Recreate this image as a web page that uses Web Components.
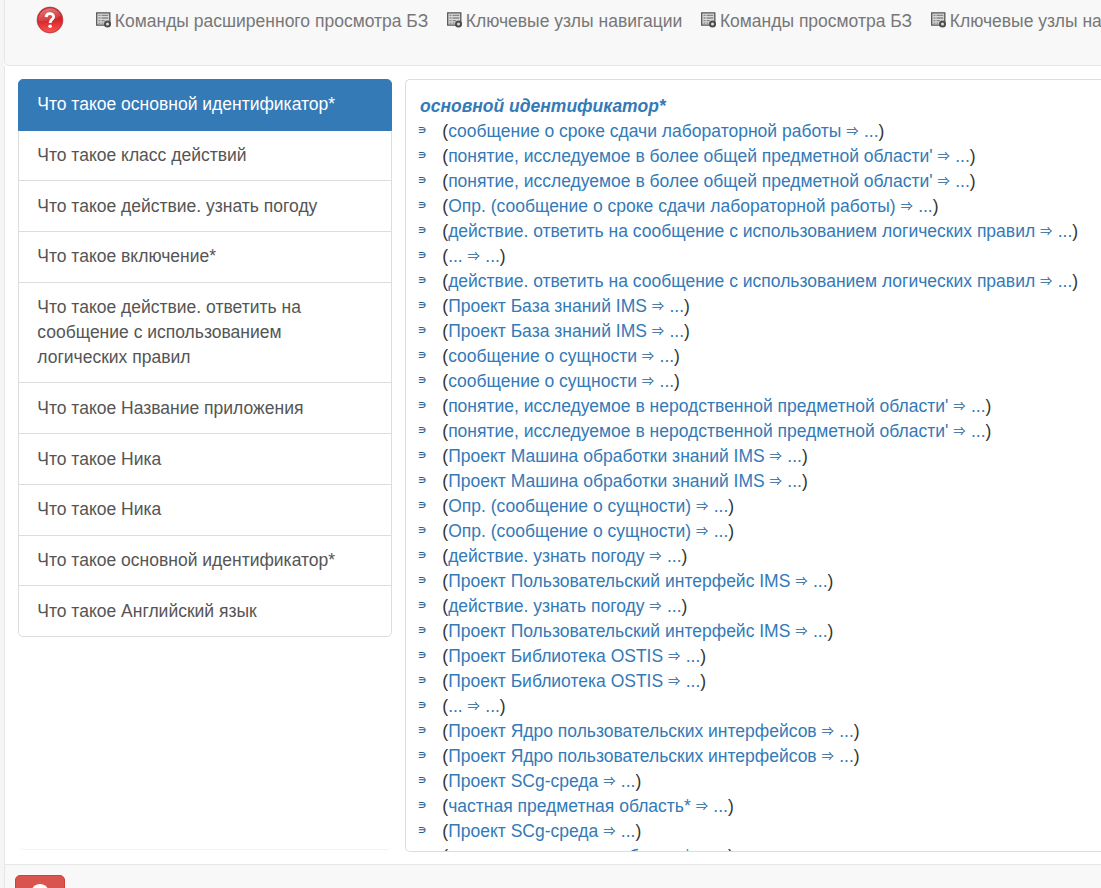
<!DOCTYPE html>
<html lang="ru">
<head>
<meta charset="utf-8">
<title>OSTIS</title>
<style>
html,body{margin:0;height:100%;overflow:hidden;background:#f5f5f5}
body{font:17.5px/25px "Liberation Sans",Arial,sans-serif;color:#333}
</style>
</head>
<body>
<ostis-app></ostis-app>
<script>
function define(name, html, setup) {
  const t = document.createElement('template');
  t.innerHTML = html;
  customElements.define(name, class extends HTMLElement {
    connectedCallback() {
      if (this.shadowRoot) return;
      this.attachShadow({mode: 'open'}).append(t.content.cloneNode(true));
      if (setup) setup(this, this.shadowRoot);
    }
  });
}

define('help-icon', `<style>:host{display:block;width:28px;height:28px}svg{display:block}</style>
<svg width="28" height="28" viewBox="0 0 28 28">
<defs><linearGradient id="g" x2="0" y2="1"><stop stop-color="#c8262a"/><stop offset=".5" stop-color="#d3252a"/><stop offset="1" stop-color="#ff5350"/></linearGradient>
<linearGradient id="s" x2=".4" y2="1"><stop stop-color="#fff" stop-opacity=".42"/><stop offset="1" stop-color="#fff" stop-opacity=".08"/></linearGradient></defs>
<circle cx="14" cy="14" r="13.4" fill="#b9b9b9"/><circle cx="14" cy="14" r="12.7" fill="url(#g)" stroke="#c9292c" stroke-width=".8"/>
<path d="M2.3 15A11.8 11.8 0 0 1 25 9.6Q17 16 2.3 15Z" fill="url(#s)"/>
<path d="M10.2 11.1C10.3 6.7 17.5 6.6 17.6 10.7C17.6 13.4 14.1 13.5 14.1 16.9" fill="none" stroke="#fff" stroke-width="2.8"/><circle cx="14.1" cy="20.2" r="1.8" fill="#fff"/></svg>`);

define('menu-icon', `<style>:host{display:block;width:15px;height:16px}svg{display:block}</style>
<svg width="15" height="16" viewBox="0 0 15 16"><path d="M.7.8H13.8V13.2H.7Z" fill="#dadada" stroke="#555" stroke-width="1.3"/>
<path d="M2.5 3.4h2M2.5 6h2M2.5 8.6h2M2.5 11.1h2M5.5 3.4h6.8M5.5 6h6.8M5.5 8.6h3.4M5.5 11.1h2" stroke="#888" stroke-width="1.4"/>
<circle cx="11.5" cy="12" r="2.5" fill="#ddd" stroke="#4c4c4c" stroke-width="2"/></svg>`);

define('menu-item', `<style>:host{display:flex;flex:none;white-space:nowrap;color:#777;padding-right:18.8px}menu-icon{margin:3px 3.8px 0 0}</style>
<menu-icon></menu-icon><slot></slot>`);

define('top-bar', `<style>:host{display:flex;box-sizing:border-box;height:66px;flex:none;padding:9px 0 0 31.5px;background:#f8f8f8;border:solid #e7e7e7;border-width:0 0 1px 1px;border-radius:0 0 0 5px;overflow:hidden}
help-icon{margin:-3px 32px 0 -.5px;flex:none}</style><help-icon></help-icon><slot></slot>`);

define('history-item', `<style>:host{display:block;box-sizing:border-box;border:1px solid #ddd;padding:12.5px 18.25px;margin-bottom:-1.25px;color:#555;background:#fff}
:host([active]){background:#337ab7;border-color:#337ab7;color:#fff;position:relative}
:host(:first-child){border-radius:5px 5px 0 0;padding-top:12.1px}:host(:last-child){border-radius:0 0 5px 5px;margin-bottom:0}</style><slot></slot>`);

define('history-list', `<style>:host{display:block;width:374px;box-sizing:border-box;flex:none;height:771px;border-bottom:1px solid #f4f4f4;border-radius:5px}</style><div></div>`,
(el, root) => {
  ['основной идентификатор*','класс действий','действие. узнать погоду','включение*','действие. ответить на сообщение с использованием логических правил','Название приложения','Ника','Ника','основной идентификатор*','Английский язык'].forEach((s, i) => {
    const n = document.createElement('history-item');
    n.textContent = 'Что такое ' + s;
    if (!i) n.setAttribute('active', '');
    root.querySelector('div').append(n);
  });
});

define('relation-row', `<style>:host{display:flex;height:25px;white-space:pre}
.mark{flex:none;width:24.8px;margin-left:-1px;color:#235f99;font:13px/22px "DejaVu Sans",sans-serif}
a{color:#337ab7}.arrow{display:inline-block;width:12.8px;height:25px;vertical-align:top;font:12.4px/25px "Noto Sans CJK JP",sans-serif;color:#235f99}</style>
<span class="mark">∍</span><span>(<a><slot></slot></a> <a class="arrow">⇒</a> <a>...</a>)</span>`);

define('article-view', `<style>:host{display:block;box-sizing:border-box;flex:1;height:773px;border:1px solid #ddd;border-right:0;border-radius:5px 0 0 5px;padding:14px 0 0 12.5px;overflow:hidden;background:#fff}
h1{font:italic bold 17.5px/25px "Liberation Sans",Arial,sans-serif;color:#337ab7;margin:0 0 0 1.5px}</style><h1>основной идентификатор*</h1><div></div>`,
(el, root) => {
  const ans = 'действие. ответить на сообщение с использованием логических правил';
  const common = 'понятие, исследуемое в более общей предметной области\'';
  const other = 'понятие, исследуемое в неродственной предметной области\'';
  const kb = 'Проект База знаний IMS', ent = 'сообщение о сущности', m = 'Проект Машина обработки знаний IMS';
  const def = 'Опр. (сообщение о сущности)', w = 'действие. узнать погоду', ui = 'Проект Пользовательский интерфейс IMS';
  const lib = 'Проект Библиотека OSTIS', core = 'Проект Ядро пользовательских интерфейсов', scg = 'Проект SCg-среда', part = 'частная предметная область*';
  ['сообщение о сроке сдачи лабораторной работы', common, common, 'Опр. (сообщение о сроке сдачи лабораторной работы)', ans, '...', ans, kb, kb, ent, ent, other, other, m, m, def, def, w, ui, w, ui, lib, lib, '...', core, core, scg, part, scg, part].forEach(s => {
    const n = document.createElement('relation-row');
    n.textContent = s;
    root.querySelector('div').append(n);
  });
});

define('bottom-bar', `<style>:host{display:flex;box-sizing:border-box;flex:none;height:24px;background:#f8f8f8;border-top:1px solid #e7e7e7;border-left:1px solid #e7e7e7;padding:10px 0 0 10px;overflow:hidden}
button{display:flex;align-items:flex-start;justify-content:center;box-sizing:border-box;flex:none;width:50px;height:42px;padding:8px 0 0;background:#d9534f;border:1px solid #d43f3a;border-radius:5px}svg{display:block}</style>
<button aria-label="Пользователь"><svg width="18" height="18" viewBox="0 0 18 18"><ellipse cx="9" cy="6" rx="7.8" ry="6" fill="#fff"/><path d="M1 18Q2 12 9 12T17 18Z" fill="#fff"/></svg></button>`);

define('ostis-app', `<style>:host{display:flex;flex-direction:column;height:888px;box-sizing:border-box;margin-left:4px;background:#fff;overflow:hidden}
main{display:flex;flex:1;min-height:0;gap:13px;padding:13px 0 0 13px;border-left:1px solid #e7e7e7}</style>
<top-bar><menu-item>Команды расширенного просмотра БЗ</menu-item><menu-item>Ключевые узлы навигации</menu-item><menu-item>Команды просмотра БЗ</menu-item><menu-item>Ключевые узлы навигации</menu-item></top-bar>
<main><history-list></history-list><article-view></article-view></main><bottom-bar></bottom-bar>`);
</script>
</body>
</html>
